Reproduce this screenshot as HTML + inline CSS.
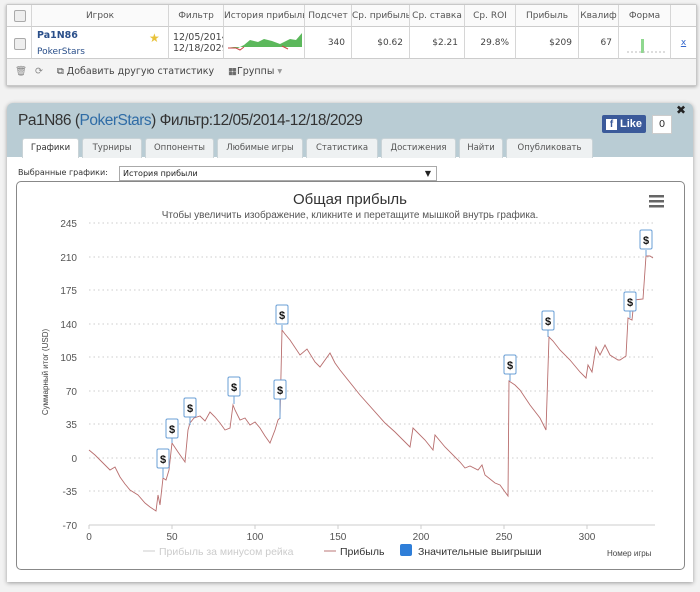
<!DOCTYPE html>
<html><head><meta charset="utf-8"><style>
body{margin:0;width:700px;height:592px;background:#f2f2f2;font-family:"DejaVu Sans","Liberation Sans",sans-serif;position:relative;overflow:hidden}
.abs{position:absolute}
.tbl{left:6px;top:4px;width:689px;height:80px;background:#fff;border:1px solid #c8c8c8;box-shadow:0 1px 3px #aaa;border-radius:2px}
.c{position:absolute;border-right:1px solid #d6d6d6;font-size:9px;color:#444;box-sizing:border-box;white-space:nowrap;overflow:hidden}
.h{top:0;height:22px;line-height:22px;text-align:center;color:#555;background:#fafafa;border-bottom:1px solid #ccc}
.d{top:22px;height:32px;line-height:32px;text-align:right;padding-right:6px;border-bottom:1px solid #ccc}
.cb{width:10px;height:10px;border:1px solid #aaa;border-radius:2px;background:#eee;position:absolute;left:7px}
.tab{position:absolute;top:138px;height:19px;line-height:19px;font-size:8.5px;color:#555;background:#eef1f2;border:1px solid #c9d3d7;border-bottom:none;border-radius:3px 3px 0 0;text-align:center;white-space:nowrap}
</style></head><body>
<div class="abs tbl">
 <div class="c h" style="left:0;width:25px"><div class="cb" style="top:5px"></div></div>
 <div class="c h" style="left:25px;width:137px">Игрок</div>
 <div class="c h" style="left:162px;width:55px">Фильтр</div>
 <div class="c h" style="left:217px;width:81px">История прибыль</div>
 <div class="c h" style="left:298px;width:47px">Подсчет</div>
 <div class="c h" style="left:345px;width:58px">Ср. прибыль</div>
 <div class="c h" style="left:403px;width:55px">Ср. ставка</div>
 <div class="c h" style="left:458px;width:51px">Ср. ROI</div>
 <div class="c h" style="left:509px;width:63px">Прибыль</div>
 <div class="c h" style="left:572px;width:40px">Квалиф</div>
 <div class="c h" style="left:612px;width:52px">Форма</div>
 <div class="c h" style="left:664px;width:25px;border-right:none"></div>
 <div class="c d" style="left:0;width:25px"><div class="cb" style="top:11px"></div></div>
 <div class="c d" style="left:25px;width:137px;text-align:left;line-height:14px;padding-left:5px"><div style="color:#2a4f8a;font-weight:bold;font-size:9.5px;margin-top:2px">Pa1N86</div><div style="color:#2a4f8a;margin-top:2px">PokerStars</div><span class="abs" style="left:117px;top:4px;color:#e8c23a;font-size:12px">★</span></div>
 <div class="c d" style="left:162px;width:55px;text-align:left;line-height:11px;padding:5px 0 0 4px;font-size:9.5px">12/05/2014<br>12/18/2029</div>
 <div class="c d" style="left:217px;width:81px;padding:0"><svg width="80" height="32" class="abs" style="left:0;top:0"><path d="M6 20 L14 21 L20 18 L26 13 L34 15 L40 12 L48 14 L56 17 L66 12 L72 13 L78 6 L78 20 L6 20Z" fill="#5cb85c"/><path d="M4 21 L12 21 L16 23 L20 20" stroke="#c44" fill="none"/><path d="M58 19 L64 22" stroke="#c44"/></svg></div>
 <div class="c d" style="left:298px;width:47px">340</div>
 <div class="c d" style="left:345px;width:58px">$0.62</div>
 <div class="c d" style="left:403px;width:55px">$2.21</div>
 <div class="c d" style="left:458px;width:51px">29.8%</div>
 <div class="c d" style="left:509px;width:63px">$209</div>
 <div class="c d" style="left:572px;width:40px">67</div>
 <div class="c d" style="left:612px;width:52px;padding:0"><svg width="52" height="32" class="abs" style="left:0;top:0"><rect x="22" y="12" width="3" height="14" fill="#8fd88f"/><path d="M8 25 H46" stroke="#bbb" stroke-dasharray="2 2"/></svg></div>
 <div class="c d" style="left:664px;width:25px;border-right:none;text-align:center;padding:0;color:#36c;text-decoration:underline">x</div>
 <div class="abs" style="left:0;top:54px;width:689px;height:26px;background:#f4f4f4;font-size:9.5px;color:#444;line-height:26px">
  <span class="abs" style="left:8px;color:#888">🗑</span><span class="abs" style="left:28px;color:#888">⟳</span>
  <span class="abs" style="left:50px">⧉ Добавить другую статистику</span><span class="abs" style="left:221px">▦Группы <span style="color:#999">▾</span></span>
 </div>
</div>

<div class="abs" style="left:7px;top:103px;width:686px;height:479px;background:#b9ccd4;border-radius:6px 6px 0 0;box-shadow:0 1px 4px #999">
 <div class="abs" style="left:11px;top:9px;font-size:15.5px;color:#333;font-family:'Liberation Sans',sans-serif;letter-spacing:-0.5px">Pa1N86 (<span style="color:#2f6ca6">PokerStars</span>) Фильтр:12/05/2014-12/18/2029</div>
 <div class="abs" style="left:595px;top:12px;width:44px;height:18px;background:#3b5a9a;border-radius:2px;color:#fff;font-size:11px;font-weight:bold;line-height:18px;font-family:'Liberation Sans',sans-serif"><span style="display:inline-block;background:#fff;color:#3b5a9a;width:11px;height:11px;line-height:12px;text-align:center;margin:0 3px 0 4px;font-size:10px">f</span>Like</div>
 <div class="abs" style="left:645px;top:12px;width:18px;height:17px;background:#fff;border:1px solid #ccc;font-size:10px;line-height:17px;text-align:center;color:#333">0</div>
 <div class="abs" style="left:669px;top:0;font-size:12px;font-weight:bold;color:#222">✖</div>
 <div class="abs" style="left:0;top:54px;width:686px;height:425px;background:#fff"></div>
</div>
<div class="tab" style="left:22px;width:55px;background:#fff;color:#333">Графики</div>
<div class="tab" style="left:82px;width:58px">Турниры</div>
<div class="tab" style="left:145px;width:67px">Оппоненты</div>
<div class="tab" style="left:217px;width:84px">Любимые игры</div>
<div class="tab" style="left:306px;width:70px">Статистика</div>
<div class="tab" style="left:381px;width:73px">Достижения</div>
<div class="tab" style="left:459px;width:42px">Найти</div>
<div class="tab" style="left:506px;width:85px">Опубликовать</div>
<div class="abs" style="left:18px;top:168px;font-size:8px;color:#333">Выбранные графики:</div>
<div class="abs" style="left:119px;top:166px;border:1px solid #aaa;font-size:8px;line-height:13px;padding-left:3px;box-sizing:border-box;width:318px;height:15px;color:#222">История прибыли<span class="abs" style="right:5px;top:0;font-size:8px">▼</span></div>

<div class="abs" style="left:16px;top:181px;width:669px;height:389px;border:1px solid #888;border-radius:5px;background:#fff;box-sizing:border-box"></div>
<svg class="abs" style="left:0;top:0" width="700" height="592" font-family="Liberation Sans, DejaVu Sans, sans-serif">
 <text x="350" y="204" font-size="15" text-anchor="middle" fill="#333">Общая прибыль</text>
 <text x="350" y="218" font-size="10" text-anchor="middle" fill="#555">Чтобы увеличить изображение, кликните и перетащите мышкой внутрь графика.</text>
 <g fill="#666"><rect x="649" y="195" width="15" height="2.5"/><rect x="649" y="200" width="15" height="2.5"/><rect x="649" y="205" width="15" height="2.5"/></g>
 <g stroke="#ccc" stroke-dasharray="1.5 3">
  <path d="M89 223H655M89 257H655M89 290H655M89 324H655M89 357H655M89 391H655M89 424H655M89 458H655M89 491H655"/>
 </g>
 <path d="M89 525H655" stroke="#ccc"/>
 <g stroke="#ccc"><path d="M89 525v4M172 525v4M255 525v4M338 525v4M421 525v4M504 525v4M587 525v4"/></g>
 <g font-size="10" fill="#555" text-anchor="end">
  <text x="77" y="227">245</text><text x="77" y="261">210</text><text x="77" y="294">175</text><text x="77" y="328">140</text><text x="77" y="361">105</text><text x="77" y="395">70</text><text x="77" y="428">35</text><text x="77" y="462">0</text><text x="77" y="495">-35</text><text x="77" y="529">-70</text>
 </g>
 <g font-size="10" fill="#555" text-anchor="middle">
  <text x="89" y="540">0</text><text x="172" y="540">50</text><text x="255" y="540">100</text><text x="338" y="540">150</text><text x="421" y="540">200</text><text x="504" y="540">250</text><text x="587" y="540">300</text>
 </g>
 <text transform="translate(48,372) rotate(-90)" font-size="8" fill="#444" text-anchor="middle">Суммарный итог (USD)</text>
 <text x="607" y="556" font-size="8" fill="#444">Номер игры</text>
 <path d="M143 551h12" stroke="#ccc"/><text x="159" y="555" font-size="10.5" fill="#ccc">Прибыль за минусом рейка</text>
 <path d="M324 551h12" stroke="#b77"/><text x="340" y="555" font-size="10.5" fill="#333">Прибыль</text>
 <rect x="400" y="544" width="12" height="12" rx="2" fill="#2f7ed8"/><text x="418" y="555" font-size="10.5" fill="#333">Значительные выигрыши</text>
 <polyline fill="none" stroke="#b86e6e" stroke-width="0.9" points="89,450 95,455 100,460 105,465 110,470 115,467 120,477 125,484 130,490 138,495 145,503 150,507 156,511 158,495 160,505 163,478 166,480 169,470 172,443 178,452 185,462 188,430 190,423 194,418 200,416 205,421 210,412 215,417 220,423 225,430 230,428 233,405 235,410 240,420 245,418 250,425 255,422 260,428 265,436 270,443 275,430 278,420 280,418 282,330 285,334 290,340 300,355 307,349 315,362 320,367 330,353 335,363 340,370 360,395 385,423 395,432 410,447 413,428 425,440 433,450 435,435 445,447 460,462 465,468 470,466 478,470 482,465 485,475 495,483 500,485 508,496 509,381 515,385 520,390 530,405 540,418 546,430 549,337 553,341 560,350 570,360 580,372 586,378 588,365 592,372 596,347 600,355 605,345 610,355 618,360 620,360 626,356 628,318 632,320 634,300 643,299 646,256 650,256 653,258"/>
 <g stroke="#6a9fd6" fill="#fff">
  <path d="M163 468v10M172 438v5M190 417v8M234 396v8M280 399v20M282 325v5M510 374v7M548 330v7M630 311v7M646 250v6" stroke="#6a9fd6"/>
  <rect x="157" y="449" width="12" height="19" rx="1.5"/>
  <rect x="166" y="419" width="12" height="19" rx="1.5"/>
  <rect x="184" y="398" width="12" height="19" rx="1.5"/>
  <rect x="228" y="377" width="12" height="19" rx="1.5"/>
  <rect x="274" y="380" width="12" height="19" rx="1.5"/>
  <rect x="276" y="305" width="12" height="19" rx="1.5"/>
  <rect x="504" y="355" width="12" height="19" rx="1.5"/>
  <rect x="542" y="311" width="12" height="19" rx="1.5"/>
  <rect x="624" y="292" width="12" height="19" rx="1.5"/>
  <rect x="640" y="230" width="12" height="19" rx="1.5"/>
 </g>
 <g font-size="11" font-weight="bold" fill="#111" text-anchor="middle">
  <text x="163" y="463">$</text><text x="172" y="433">$</text><text x="190" y="412">$</text><text x="234" y="391">$</text><text x="280" y="394">$</text><text x="282" y="319">$</text><text x="510" y="369">$</text><text x="548" y="325">$</text><text x="630" y="306">$</text><text x="646" y="244">$</text>
 </g>
</svg>
</body></html>
